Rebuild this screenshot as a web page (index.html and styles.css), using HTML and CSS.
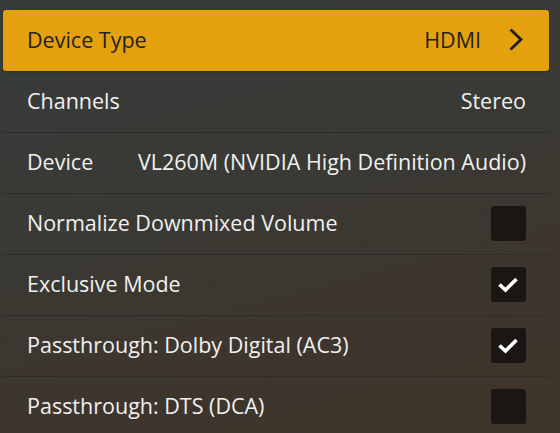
FILE: index.html
```html
<!DOCTYPE html>
<html>
<head>
<meta charset="utf-8">
<link rel="stylesheet" href="styles.css">
</head>
<body>
<div class="list">
  <div class="row active">
    <span class="label">Device Type</span>
    <span class="value">HDMI
      <svg class="chev" width="14" height="24" viewBox="0 0 14 24"><path d="M1.5 1.5 L12 11.5 L1.5 21.5" fill="none" stroke="#1e1e1e" stroke-width="2.8"/></svg>
    </span>
  </div>
  <div class="row">
    <span class="label">Channels</span>
    <span class="value">Stereo</span>
  </div>
  <div class="row">
    <span class="label">Device</span>
    <span class="value">VL260M (NVIDIA High Definition Audio)</span>
  </div>
  <div class="row">
    <span class="label">Normalize Downmixed Volume</span>
    <span class="box"></span>
  </div>
  <div class="row">
    <span class="label">Exclusive Mode</span>
    <span class="box"><svg width="35" height="35" viewBox="0 0 35 35"><path d="M8.5 17.5 L14.5 23 L25.5 12" fill="none" stroke="#fff" stroke-width="3.6"/></svg></span>
  </div>
  <div class="row">
    <span class="label">Passthrough: Dolby Digital (AC3)</span>
    <span class="box"><svg width="35" height="35" viewBox="0 0 35 35"><path d="M8.5 17.5 L14.5 23 L25.5 12" fill="none" stroke="#fff" stroke-width="3.6"/></svg></span>
  </div>
  <div class="row">
    <span class="label">Passthrough: DTS (DCA)</span>
    <span class="box"></span>
  </div>
</div>
</body>
</html>
```
FILE: styles.css
```css
html, body {
  margin: 0;
  padding: 0;
  height: 100%;
  overflow: hidden;
}
body {
  background: linear-gradient(165deg, #363b3a 0%, #393a36 35%, #3d362e 70%, #3f3429 100%);
  font-family: "Open Sans", "Noto Sans", sans-serif;
  font-size: 21.5px;
  line-height: 28px;
  color: #f0f0f0;
}
.list {
  padding: 10px 11px 0 3px;
  display: flex;
  flex-direction: column;
}
.row {
  height: 61px;
  box-sizing: border-box;
  display: flex;
  align-items: center;
  justify-content: space-between;
  padding: 0 23px 2px 24px;
  border-top: 1px solid #2c2e2b;
}
.row:nth-child(2) { border-top: none; }
.active {
  background: #e5a00d;
  border-radius: 3px;
  color: #222;
  border-top: none;
  box-shadow: 0 1px 2px rgba(0,0,0,0.3);
}
.value {
  display: flex;
  align-items: center;
}
.chev {
  margin-left: 28px;
  margin-right: 3px;
}
.box {
  width: 35px;
  height: 35px;
  background: #1a1613;
  border-radius: 3px;
  display: block;
}
.box svg { display: block; }
```
